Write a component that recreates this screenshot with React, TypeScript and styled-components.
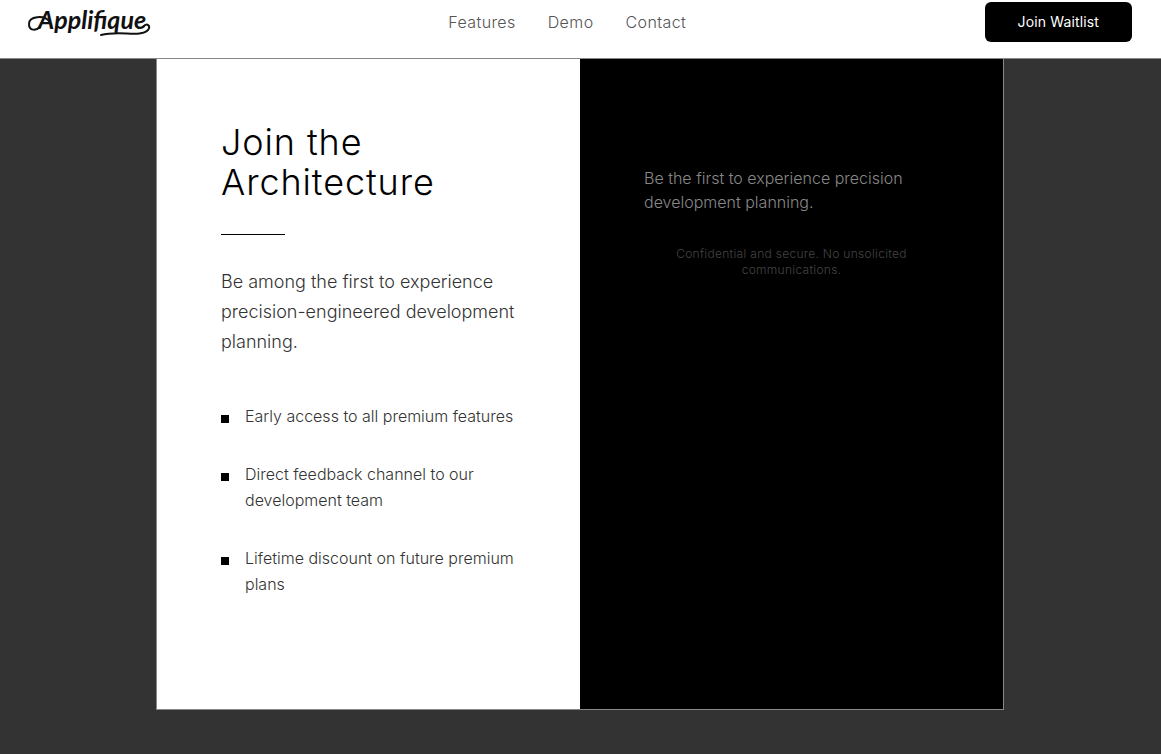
import React from "react";
import styled, { createGlobalStyle } from "styled-components";

const GlobalStyle = createGlobalStyle`
  *, *::before, *::after { box-sizing: border-box; }
  body {
    margin: 0;
    background: #333;
    color: #000;
    font-family: Inter, "Liberation Sans", sans-serif;
    font-weight: 300;
  }
  h2, p, ul { margin: 0; padding: 0; }
`;

const Header = styled.header`
  display: flex;
  justify-content: space-between;
  align-items: center;
  padding: 2px 2.5% 16px;
  background: #fff;
  border-bottom: 1px solid #888;
`;

const LogoLink = styled.a`
  display: block;
  height: 40px;
  color: #111;

  svg { display: block; overflow: visible; }
  text {
    font: italic 700 25px Lato, "Liberation Sans", sans-serif;
    fill: currentColor;
  }
`;

const Nav = styled.nav`
  display: flex;
  gap: 32px;
`;

const NavLink = styled.a`
  color: #555;
  font-size: 16px;
  line-height: 24px;
  letter-spacing: 0.025em;
  text-decoration: none;
`;

const WaitlistButton = styled.button`
  height: 40px;
  padding: 0 33px;
  border: 0;
  border-radius: 6px;
  background: #000;
  color: #fff;
  font: 400 14px/20px Inter, "Liberation Sans", sans-serif;
  letter-spacing: 0.01em;
  cursor: pointer;
`;

const Stage = styled.main`
  padding: 0 1px 44px 0;
`;

const Panel = styled.div`
  display: grid;
  grid-template-columns: 1fr 1fr;
  max-width: 848px;
  min-height: 651px;
  margin: 0 auto;
  border: 1px solid #888;
  border-top: 0;
`;

const Intro = styled.section`
  padding: 63px 64px;
  background: #fff;
`;

const Title = styled.h2`
  font-size: 36px;
  font-weight: 300;
  line-height: 40px;
  letter-spacing: 0.025em;
`;

const Rule = styled.div`
  width: 64px;
  height: 1px;
  margin: 32px 0;
  background: #000;
`;

const Lead = styled.p`
  color: #333;
  font-size: 18px;
  line-height: 30px;
`;

const Benefits = styled.ul`
  display: grid;
  gap: 32px;
  margin-top: 46px;
  list-style: none;
`;

const Benefit = styled.li`
  display: flex;
  gap: 16px;
  color: #333;
  font-size: 16px;
  line-height: 26px;

  &::before {
    content: "";
    flex: none;
    width: 8px;
    height: 8px;
    margin-top: 12px;
    background: #000;
  }
`;

const Signup = styled.section`
  padding: 107px 64px 64px;
  background: #000;
`;

const SignupText = styled.p`
  color: #888;
  font-size: 16px;
  line-height: 24px;
`;

const FinePrint = styled.p`
  margin-top: 32px;
  color: #444;
  font-size: 12px;
  line-height: 16px;
  letter-spacing: 0.025em;
  text-align: center;
`;

const Logo = () => (
  <svg width="121" height="40" viewBox="0 0 121 40" role="img" aria-label="Applifique">
    <text x="9" y="27">Applifique</text>
    <g fill="none" stroke="currentColor" strokeLinecap="round" strokeLinejoin="round">
      <path d="M20 19C15 13 0 14 0 22C0 29 7 29 11 25" strokeWidth="2" />
      <path d="M114 25C118 20 122 24 119 28C111 36 92 28 72 33" strokeWidth="2" />
    </g>
  </svg>
);

const links = ["Features", "Demo", "Contact"];

const benefits = [
  "Early access to all premium features",
  "Direct feedback channel to our development team",
  "Lifetime discount on future premium plans",
];

export default function App() {
  return (
    <>
      <GlobalStyle />
      <Header>
        <LogoLink href="#home"><Logo /></LogoLink>
        <Nav>
          {links.map((label) => (
            <NavLink key={label} href={`#${label.toLowerCase()}`}>{label}</NavLink>
          ))}
        </Nav>
        <WaitlistButton type="button">Join Waitlist</WaitlistButton>
      </Header>
      <Stage>
        <Panel>
          <Intro>
            <Title>Join the Architecture</Title>
            <Rule />
            <Lead>Be among the first to experience precision-engineered development planning.</Lead>
            <Benefits>
              {benefits.map((text) => <Benefit key={text}>{text}</Benefit>)}
            </Benefits>
          </Intro>
          <Signup>
            <SignupText>Be the first to experience precision development planning.</SignupText>
            <FinePrint>Confidential and secure. No unsolicited communications.</FinePrint>
          </Signup>
        </Panel>
      </Stage>
    </>
  );
}
